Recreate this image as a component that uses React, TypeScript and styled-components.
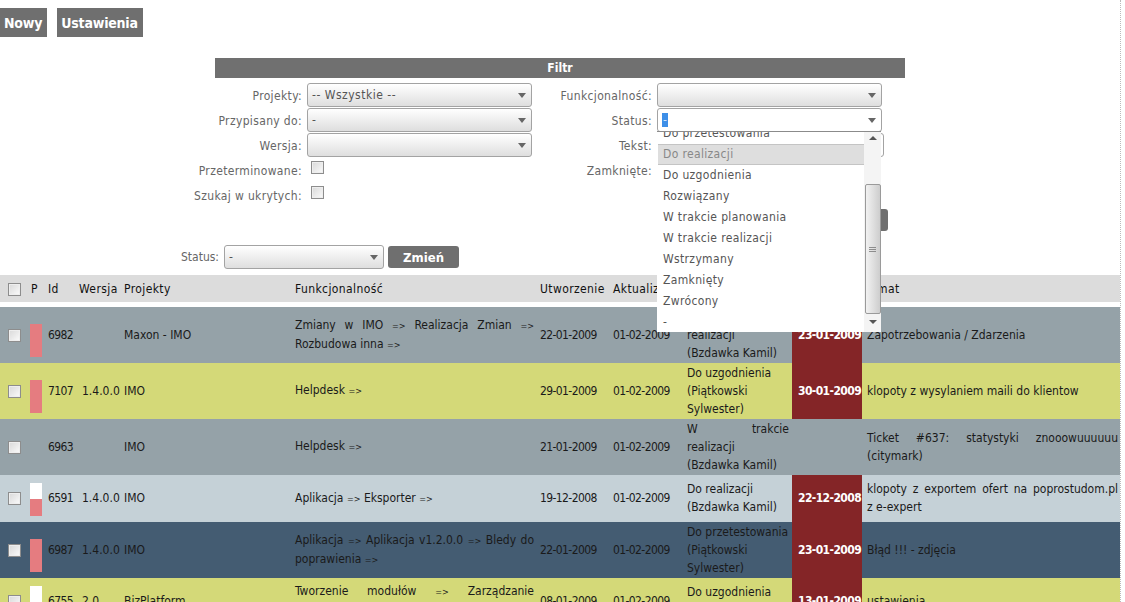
import React from 'react';
import styled, { createGlobalStyle } from 'styled-components';

const GlobalStyle = createGlobalStyle`
  html, body {
    margin: 0;
    padding: 0;
    height: 100%;
    overflow: hidden;
    background: #fff;
  }
  body {
    font-family: "DejaVu Sans Condensed", "DejaVu Sans", sans-serif;
    font-size: 11.5px;
    color: #222;
  }
`;

const Page = styled.div`
  width: 1120px;
  height: 602px;
  overflow: hidden;
  border-right: 1px dotted #bbb;
`;

const TopBar = styled.div`
  display: flex;
  gap: 10px;
  padding-top: 8px;
`;

const TopButton = styled.a`
  display: block;
  height: 29px;
  line-height: 30px;
  padding: 0 5px 0 4px;
  background: #6f6f6f;
  color: #fff;
  font-size: 14px;
  font-weight: bold;
  letter-spacing: -0.2px;
`;

const FilterTitle = styled.div`
  width: 690px;
  height: 20px;
  margin: 21px 0 0 215px;
  background: #707070;
  color: #fff;
  font-size: 12px;
  font-weight: bold;
  line-height: 21px;
  text-align: center;
`;

const FilterGrid = styled.div`
  display: grid;
  grid-template-columns: 302px 230px 120px 236px;
  grid-auto-rows: 25px;
  padding-top: 5px;
`;

const Label = styled.label`
  display: flex;
  justify-content: flex-end;
  align-items: center;
  color: #666;
  font-size: 12px;
  letter-spacing: 0.35px;
  white-space: nowrap;
`;

const Control = styled.div`
  position: relative;
  display: flex;
  align-items: flex-start;
  padding-left: 5px;
`;

const Select = styled.div<{ $open?: boolean; $width?: number }>`
  position: relative;
  box-sizing: border-box;
  width: ${(p) => p.$width ?? 225}px;
  height: 24px;
  padding-left: 4px;
  border: 1px solid #a3a3a3;
  border-radius: 3px;
  background: ${(p) => (p.$open ? '#fff' : 'linear-gradient(#fff, #dedede)')};
  color: #555;
  font-size: 12px;
  letter-spacing: 0.5px;
  line-height: 22px;
  &::after {
    content: '';
    position: absolute;
    right: 5px;
    top: 9px;
    border: 4px solid transparent;
    border-top: 5px solid #666;
    border-bottom: 0;
  }
`;

const Selected = styled.span`
  background: #3d8fe8;
  color: #cfe3fa;
  padding: 0 1px;
`;

const TextInput = styled.div`
  box-sizing: border-box;
  width: 227px;
  height: 24px;
  border: 1px solid #a3a3a3;
  border-radius: 3px;
  background: #fff;
`;

const CheckBox = styled.input.attrs({ type: 'checkbox' })`
  appearance: none;
  box-sizing: border-box;
  width: 13px;
  height: 13px;
  margin: 0;
  border: 1px solid #8d8d8d;
  background: linear-gradient(135deg, #d8d8d8, #fbfbfb);
  box-shadow: inset 0 0 0 1px #eee;
  vertical-align: middle;
`;

const FormCheckBox = styled(CheckBox)`
  margin: 3px 0 0 4px;
`;

const ActionCell = styled.div`
  grid-column: 4;
  display: flex;
  justify-content: flex-end;
  padding-top: 1px;
`;

const ActionButton = styled.button<{ $width: number }>`
  width: ${(p) => p.$width}px;
  height: 22px;
  padding: 0;
  border: 0;
  border-radius: 3px;
  background: #6f6f6f;
  color: #fff;
  font-family: inherit;
  font-size: 13px;
  font-weight: bold;
`;

const Dropdown = styled.div`
  position: absolute;
  z-index: 5;
  left: 5px;
  top: 23px;
  display: flex;
  width: 224px;
  height: 200px;
  overflow: hidden;
  border-top: 1px solid #8b8b8b;
  background: #fff;
`;

const OptionList = styled.ul`
  flex: 1;
  margin: -9px 0 0;
  padding: 0 0 0 1px;
  list-style: none;
`;

const OptionItem = styled.li<{ $active?: boolean }>`
  box-sizing: border-box;
  height: 21px;
  padding-left: 5px;
  background: ${(p) => (p.$active ? '#dedede' : 'transparent')};
  border-top: 1px solid ${(p) => (p.$active ? '#c4c4c4' : 'transparent')};
  border-bottom: 1px solid ${(p) => (p.$active ? '#c4c4c4' : 'transparent')};
  color: ${(p) => (p.$active ? '#888' : '#555')};
  font-size: 12px;
  letter-spacing: 0.35px;
  line-height: 19px;
`;

const ScrollBar = styled.div`
  display: flex;
  flex-direction: column;
  align-items: center;
  width: 17px;
  background: #f4f4f4;
`;

const ScrollArrow = styled.span<{ $up?: boolean }>`
  flex: none;
  width: 0;
  height: 0;
  margin-top: ${(p) => (p.$up ? 4 : 6)}px;
  border: 4px solid transparent;
  ${(p) => (p.$up ? 'border-bottom: 4px solid #555; border-top: 0;' : 'border-top: 4px solid #555; border-bottom: 0;')}
`;

const ScrollThumb = styled.div`
  display: flex;
  align-items: center;
  justify-content: center;
  box-sizing: border-box;
  width: 16px;
  height: 130px;
  margin-top: 44px;
  border: 1px solid #9a9a9a;
  border-radius: 2px;
  background: linear-gradient(90deg, #f2f2f2, #cdcdcd);
`;

const Grip = styled.svg`
  width: 7px;
  height: 7px;
`;

const StatusBar = styled.div`
  display: flex;
  align-items: flex-start;
  gap: 4px;
  height: 30px;
  margin-top: 12px;
`;

const StatusLabel = styled(Label)`
  width: 219px;
  height: 24px;
  margin-right: 1px;
  letter-spacing: 0;
`;

const StatusButton = styled(ActionButton)`
  margin-top: 1px;
`;

const Table = styled.table`
  width: 1120px;
  table-layout: fixed;
  border-collapse: collapse;
  border-spacing: 0;
`;

const HeadCell = styled.th`
  box-sizing: border-box;
  height: 29px;
  padding: 2px 3px 0;
  overflow: visible;
  border-bottom: 5px solid #fff;
  background: #dcdcdc;
  color: #111;
  font-size: 12px;
  font-weight: normal;
  letter-spacing: 0.4px;
  text-align: left;
  white-space: nowrap;
`;

const HeadCheckCell = styled(HeadCell)`
  text-align: center;
`;

const Row = styled.tr<{ $bg: string }>`
  background: ${(p) => p.$bg};
`;

const Cell = styled.td`
  padding: 1px 3px;
  color: #1a1a1a;
  font-size: 12px;
  line-height: 18px;
  text-align: justify;
  vertical-align: middle;
`;

const CenterCell = styled(Cell)`
  text-align: center;
`;

const VersionCell = styled(Cell)`
  padding-left: 6px;
  padding-right: 0;
  text-align: left;
`;

const NumberCell = styled(Cell)`
  letter-spacing: -0.6px;
  white-space: nowrap;
`;

const Arrow = styled.span`
  font-size: 9px;
`;

const PriorityCell = styled.td`
  padding: 8px 0 6px 2px;
  vertical-align: bottom;
  line-height: 0;
`;

const PriorityBar = styled.div<{ $fill: number }>`
  width: 12px;
  height: 33px;
  background: linear-gradient(
    to top,
    #e57c80 ${(p) => p.$fill}%,
    #fff ${(p) => p.$fill}%
  );
`;

const DeadlineCell = styled.td<{ $late: boolean }>`
  padding: 0 0 0 6px;
  background: ${(p) => (p.$late ? '#842527' : 'transparent')};
  color: #fff;
  font-size: 12px;
  font-weight: bold;
  letter-spacing: -0.6px;
  white-space: nowrap;
`;

const SubjectCell = styled(Cell)`
  padding: 1px 2px 1px 5px;
`;

const columns = [28, 17, 31, 45, 171, 245, 73, 74, 108, 70, 258];

const statusOptions = [
  'Do przetestowania',
  'Do realizacji',
  'Do uzgodnienia',
  'Rozwiązany',
  'W trakcie planowania',
  'W trakcie realizacji',
  'Wstrzymany',
  'Zamknięty',
  'Zwrócony',
  '-',
];

const tasks = [
  {
    id: 6982, fill: 100, bg: '#95a2a8', version: '', project: 'Maxon - IMO',
    feature: 'Zmiany w IMO => Realizacja Zmian => Rozbudowa inna =>',
    created: '22-01-2009', updated: '01-02-2009',
    status: 'W trakcie realizacji', owner: '(Bzdawka Kamil)', deadline: '23-01-2009',
    subject: 'Zapotrzebowania / Zdarzenia',
  },
  {
    id: 7107, fill: 100, bg: '#d4d978', version: '1.4.0.0', project: 'IMO',
    feature: 'Helpdesk =>',
    created: '29-01-2009', updated: '01-02-2009',
    status: 'Do uzgodnienia', owner: '(Piątkowski Sylwester)', deadline: '30-01-2009',
    subject: 'klopoty z wysylaniem maili do klientow',
  },
  {
    id: 6963, fill: -1, bg: '#95a2a8', version: '', project: 'IMO',
    feature: 'Helpdesk =>',
    created: '21-01-2009', updated: '01-02-2009',
    status: 'W trakcie realizacji', owner: '(Bzdawka Kamil)', deadline: '',
    subject: 'Ticket #637: statystyki znooowuuuuuu (citymark)',
  },
  {
    id: 6591, fill: 50, bg: '#c5d1d7', version: '1.4.0.0', project: 'IMO',
    feature: 'Aplikacja => Eksporter =>',
    created: '19-12-2008', updated: '01-02-2009',
    status: 'Do realizacji', owner: '(Bzdawka Kamil)', deadline: '22-12-2008',
    subject: 'klopoty z exportem ofert na poprostudom.pl z\u00a0e-expert',
  },
  {
    id: 6987, fill: 100, bg: '#445c72', version: '1.4.0.0', project: 'IMO',
    feature: 'Aplikacja => Aplikacja v1.2.0.0 => Bledy do poprawienia =>',
    created: '22-01-2009', updated: '01-02-2009',
    status: 'Do przetestowania', owner: '(Piątkowski Sylwester)', deadline: '23-01-2009',
    subject: 'Błąd !!! - zdjęcia',
  },
  {
    id: 6755, fill: 0, bg: '#d4d978', version: '2.0', project: 'BizPlatform',
    feature: 'Tworzenie modułów => Zarządzanie ustawieniami =>',
    created: '08-01-2009', updated: '01-02-2009',
    status: 'Do uzgodnienia', owner: '(Bzdawka Kamil)', deadline: '13-01-2009',
    subject: 'ustawienia',
  },
];

// the "=>" separators are much narrower in the original font
const renderFeature = (feature: string) =>
  feature.split('=>').map((part, i, all) => (
    <React.Fragment key={i}>
      {part}
      {i < all.length - 1 && <Arrow>{'=>'}</Arrow>}
    </React.Fragment>
  ));

const App: React.FC = () => {
  return (
    <Page>
      <GlobalStyle />
      <TopBar>
        <TopButton>Nowy</TopButton>
        <TopButton>Ustawienia</TopButton>
      </TopBar>

      <FilterTitle>Filtr</FilterTitle>

      {/* Filter form */}
      <FilterGrid>
        <Label>Projekty:</Label>
        <Control><Select>-- Wszystkie --</Select></Control>
        <Label>Funkcjonalność:</Label>
        <Control><Select /></Control>

        <Label>Przypisany do:</Label>
        <Control><Select>-</Select></Control>
        <Label>Status:</Label>
        <Control>
          <Select $open><Selected>-</Selected></Select>
          <Dropdown>
            <OptionList>
              {statusOptions.map((option) => (
                <OptionItem key={option} $active={option === 'Do realizacji'}>{option}</OptionItem>
              ))}
            </OptionList>
            <ScrollBar>
              <ScrollArrow $up />
              <ScrollThumb>
                <Grip viewBox="0 0 7 7">
                  <path d="M0 1.5h7M0 3.5h7M0 5.5h7" stroke="#777" strokeWidth="0.8" />
                </Grip>
              </ScrollThumb>
              <ScrollArrow />
            </ScrollBar>
          </Dropdown>
        </Control>

        <Label>Wersja:</Label>
        <Control><Select /></Control>
        <Label>Tekst:</Label>
        <Control><TextInput /></Control>

        <Label>Przeterminowane:</Label>
        <Control><FormCheckBox /></Control>
        <Label>Zamknięte:</Label>
        <Control><FormCheckBox /></Control>

        <Label>Szukaj w ukrytych:</Label>
        <Control><FormCheckBox /></Control>
        <span />
        <span />

        <ActionCell><ActionButton $width={70}>Filtruj</ActionButton></ActionCell>
      </FilterGrid>

      <StatusBar>
        <StatusLabel>Status:</StatusLabel>
        <Select $width={160}>-</Select>
        <StatusButton $width={71}>Zmień</StatusButton>
      </StatusBar>

      {/* Task list */}
      <Table>
        <colgroup>
          {columns.map((width, i) => <col key={i} style={{ width }} />)}
        </colgroup>
        <thead>
          <tr>
            <HeadCheckCell><CheckBox /></HeadCheckCell>
            <HeadCell>P</HeadCell>
            <HeadCell>Id</HeadCell>
            <HeadCell>Wersja</HeadCell>
            <HeadCell>Projekty</HeadCell>
            <HeadCell>Funkcjonalność</HeadCell>
            <HeadCell>Utworzenie</HeadCell>
            <HeadCell>Aktualizacja</HeadCell>
            <HeadCell>Status</HeadCell>
            <HeadCell>Termin</HeadCell>
            <HeadCell>Temat</HeadCell>
          </tr>
        </thead>
        <tbody>
          {tasks.map((task) => (
            <Row key={task.id} $bg={task.bg}>
              <CenterCell><CheckBox /></CenterCell>
              <PriorityCell>
                {task.fill >= 0 && <PriorityBar $fill={task.fill} />}
              </PriorityCell>
              <NumberCell>{task.id}</NumberCell>
              <VersionCell>{task.version}</VersionCell>
              <Cell>{task.project}</Cell>
              <Cell>{renderFeature(task.feature)}</Cell>
              <NumberCell>{task.created}</NumberCell>
              <NumberCell>{task.updated}</NumberCell>
              <Cell>{task.status}<br />{task.owner}</Cell>
              <DeadlineCell $late={task.deadline !== ''}>{task.deadline}</DeadlineCell>
              <SubjectCell>{task.subject}</SubjectCell>
            </Row>
          ))}
        </tbody>
      </Table>
    </Page>
  );
};

export default App;
